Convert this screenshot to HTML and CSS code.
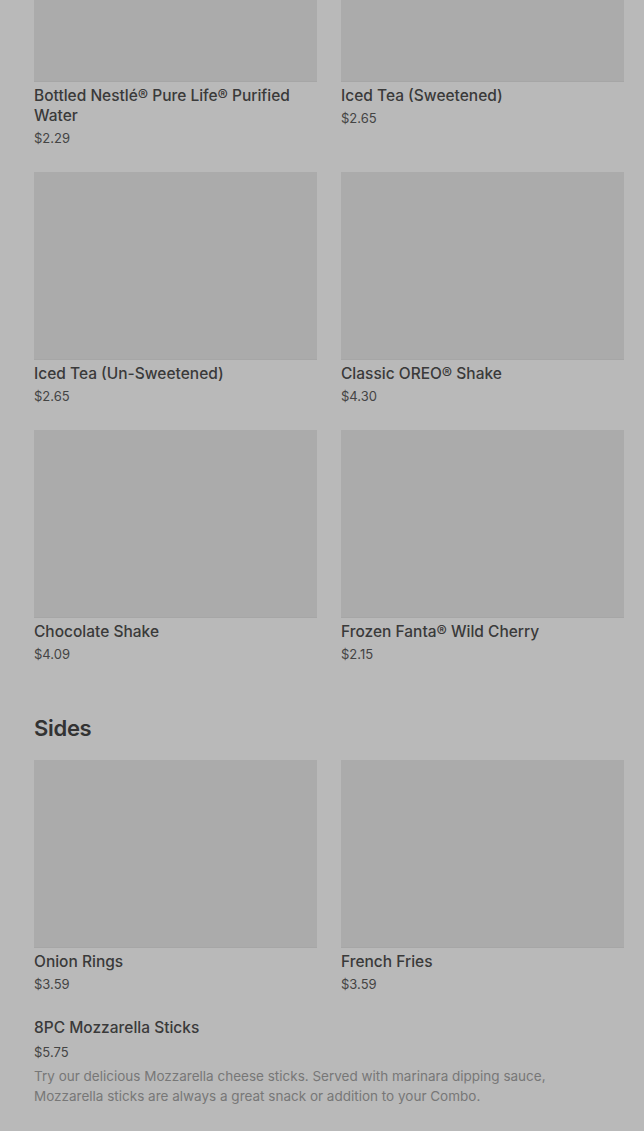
FILE: index.html
```html
<!DOCTYPE html>
<html lang="en">
<head>
  <meta charset="UTF-8">
  <meta name="viewport" content="width=device-width, initial-scale=1.0">
  <title>Menu</title>
  <link rel="stylesheet" href="styles.css">
</head>
<body>

  <div class="menu">
    <!-- Drinks (continued) -->
    <div class="section drinks">
      <div class="item-grid">
        <div class="item">
          <div class="item-image"></div>
          <div class="item-name">Bottled Nestlé® Pure Life® Purified Water</div>
          <div class="item-price">$2.29</div>
        </div>
        <div class="item">
          <div class="item-image"></div>
          <div class="item-name">Iced Tea (Sweetened)</div>
          <div class="item-price">$2.65</div>
        </div>
        <div class="item">
          <div class="item-image"></div>
          <div class="item-name">Iced Tea (Un-Sweetened)</div>
          <div class="item-price">$2.65</div>
        </div>
        <div class="item">
          <div class="item-image"></div>
          <div class="item-name">Classic OREO® Shake</div>
          <div class="item-price">$4.30</div>
        </div>
        <div class="item">
          <div class="item-image"></div>
          <div class="item-name">Chocolate Shake</div>
          <div class="item-price">$4.09</div>
        </div>
        <div class="item">
          <div class="item-image"></div>
          <div class="item-name">Frozen Fanta® Wild Cherry</div>
          <div class="item-price">$2.15</div>
        </div>
      </div>
    </div>

    <!-- Sides -->
    <div class="section">
      <h2 class="section-title">Sides</h2>
      <div class="item-grid">
        <div class="item">
          <div class="item-image"></div>
          <div class="item-name">Onion Rings</div>
          <div class="item-price">$3.59</div>
        </div>
        <div class="item">
          <div class="item-image"></div>
          <div class="item-name">French Fries</div>
          <div class="item-price">$3.59</div>
        </div>
        <div class="item item-wide">
          <div class="item-name">8PC Mozzarella Sticks</div>
          <div class="item-price wide-price">$5.75</div>
          <div class="item-desc">Try our delicious Mozzarella cheese sticks. Served with marinara dipping sauce, Mozzarella sticks are always a great snack or addition to your Combo.</div>
        </div>
      </div>
    </div>
  </div>

</body>
</html>
```

FILE: styles.css
```css
body {
  font-family: Inter, 'Noto Sans', sans-serif;
  margin: 0;
  padding: 0;
  background: #b9b9b9;
  color: #3a3a3a;
  overflow: hidden;
}

.menu {
  padding: 0 20px 0 34px;
  margin-top: -106px;
}

.section-title {
  font-size: 22px;
  font-weight: 600;
  line-height: 32px;
  letter-spacing: -0.3px;
  color: #333;
  margin: 49px 0 16px;
}

.item-grid {
  display: grid;
  grid-template-columns: 1fr 1fr;
  column-gap: 24px;
  row-gap: 25px;
}

.item-image {
  height: 188px;
  background-color: #ababab;
  border-bottom: 1px solid #a6a6a6;
  box-sizing: border-box;
}

.item-name {
  font-size: 15.5px;
  font-weight: 500;
  line-height: 20px;
  margin-top: 4px;
  color: #3a3a3a;
}

.item-price {
  font-size: 13px;
  line-height: 18px;
  margin-top: 3px;
  color: #444;
}

.item-wide {
  grid-column: 1 / -1;
}

.item-wide .item-name {
  margin-top: 0;
}

.wide-price {
  margin-top: 5px;
}

.item-desc {
  font-size: 13.5px;
  line-height: 20px;
  color: #777;
  margin-top: 5px;
  max-width: 540px;
}
```
